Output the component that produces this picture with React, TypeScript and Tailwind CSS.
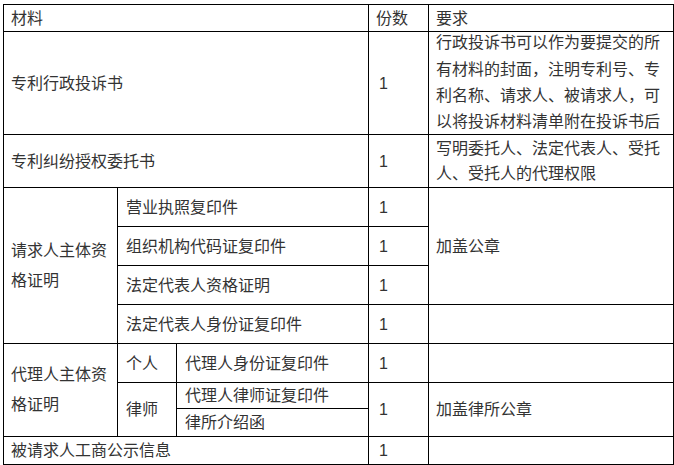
import type { ReactNode } from "react"

type CellProps = {
  col: string
  row: string
  children?: ReactNode
  className?: string
}

function Cell({ col, row, children, className = "" }: CellProps) {
  return (
    <div className={`flex items-center bg-white pl-[7px] pr-1 ${col} ${row} ${className}`}>
      <div>{children}</div>
    </div>
  )
}

export default function App() {
  return (
    <div className="min-h-screen bg-white pl-[3px] pt-[4px]">
      <div
        className="grid w-[671px] grid-cols-[113px_58px_191px_59px_244px] grid-rows-[26px_102px_52px_38px_38px_38px_38px_38px_25px_27px_27px] gap-px bg-black p-px text-[16px] leading-[25px] text-[#333]"
        style={{ fontFamily: '"Liberation Sans", "Noto Sans CJK SC", sans-serif' }}
      >
        {/* header */}
        <Cell col="col-[1/4]" row="row-[1]">材料</Cell>
        <Cell col="col-[4]" row="row-[1]">份数</Cell>
        <Cell col="col-[5]" row="row-[1]">要求</Cell>

        {/* 专利行政投诉书 */}
        <Cell col="col-[1/4]" row="row-[2]">专利行政投诉书</Cell>
        <Cell col="col-[4]" row="row-[2]" className="pl-[10px]">1</Cell>
        <Cell col="col-[5]" row="row-[2]" className="leading-[26.3px]">
          行政投诉书可以作为要提交的所有材料的封面，注明专利号、专利名称、请求人、被请求人，可以将投诉材料清单附在投诉书后
        </Cell>

        {/* 授权委托书 */}
        <Cell col="col-[1/4]" row="row-[3]">专利纠纷授权委托书</Cell>
        <Cell col="col-[4]" row="row-[3]" className="pl-[10px]">1</Cell>
        <Cell col="col-[5]" row="row-[3]">写明委托人、法定代表人、受托人、受托人的代理权限</Cell>

        {/* 请求人主体资格证明 */}
        <Cell col="col-[1]" row="row-[4/8]" className="leading-[30px]">请求人主体资格证明</Cell>
        <Cell col="col-[2/4]" row="row-[4]" className="pl-[8px]">营业执照复印件</Cell>
        <Cell col="col-[2/4]" row="row-[5]" className="pl-[8px]">组织机构代码证复印件</Cell>
        <Cell col="col-[2/4]" row="row-[6]" className="pl-[8px]">法定代表人资格证明</Cell>
        <Cell col="col-[2/4]" row="row-[7]" className="pl-[8px]">法定代表人身份证复印件</Cell>
        <Cell col="col-[4]" row="row-[4]" className="pl-[10px]">1</Cell>
        <Cell col="col-[4]" row="row-[5]" className="pl-[10px]">1</Cell>
        <Cell col="col-[4]" row="row-[6]" className="pl-[10px]">1</Cell>
        <Cell col="col-[4]" row="row-[7]" className="pl-[10px]">1</Cell>
        <Cell col="col-[5]" row="row-[4/7]">加盖公章</Cell>
        <Cell col="col-[5]" row="row-[7]" />

        {/* 代理人主体资格证明 */}
        <Cell col="col-[1]" row="row-[8/11]" className="leading-[30px]">代理人主体资格证明</Cell>
        <Cell col="col-[2]" row="row-[8]" className="pl-[8px]">个人</Cell>
        <Cell col="col-[3]" row="row-[8]" className="pl-[8px]">代理人身份证复印件</Cell>
        <Cell col="col-[4]" row="row-[8]" className="pl-[10px]">1</Cell>
        <Cell col="col-[5]" row="row-[8]" />
        <Cell col="col-[2]" row="row-[9/11]" className="pl-[8px]">律师</Cell>
        <Cell col="col-[3]" row="row-[9]" className="pl-[8px]">代理人律师证复印件</Cell>
        <Cell col="col-[3]" row="row-[10]" className="pl-[8px]">律所介绍函</Cell>
        <Cell col="col-[4]" row="row-[9/11]" className="pl-[10px]">1</Cell>
        <Cell col="col-[5]" row="row-[9/11]">加盖律所公章</Cell>

        {/* 被请求人 */}
        <Cell col="col-[1/4]" row="row-[11]">被请求人工商公示信息</Cell>
        <Cell col="col-[4]" row="row-[11]" className="pl-[10px]">1</Cell>
        <Cell col="col-[5]" row="row-[11]" />
      </div>
    </div>
  )
}
